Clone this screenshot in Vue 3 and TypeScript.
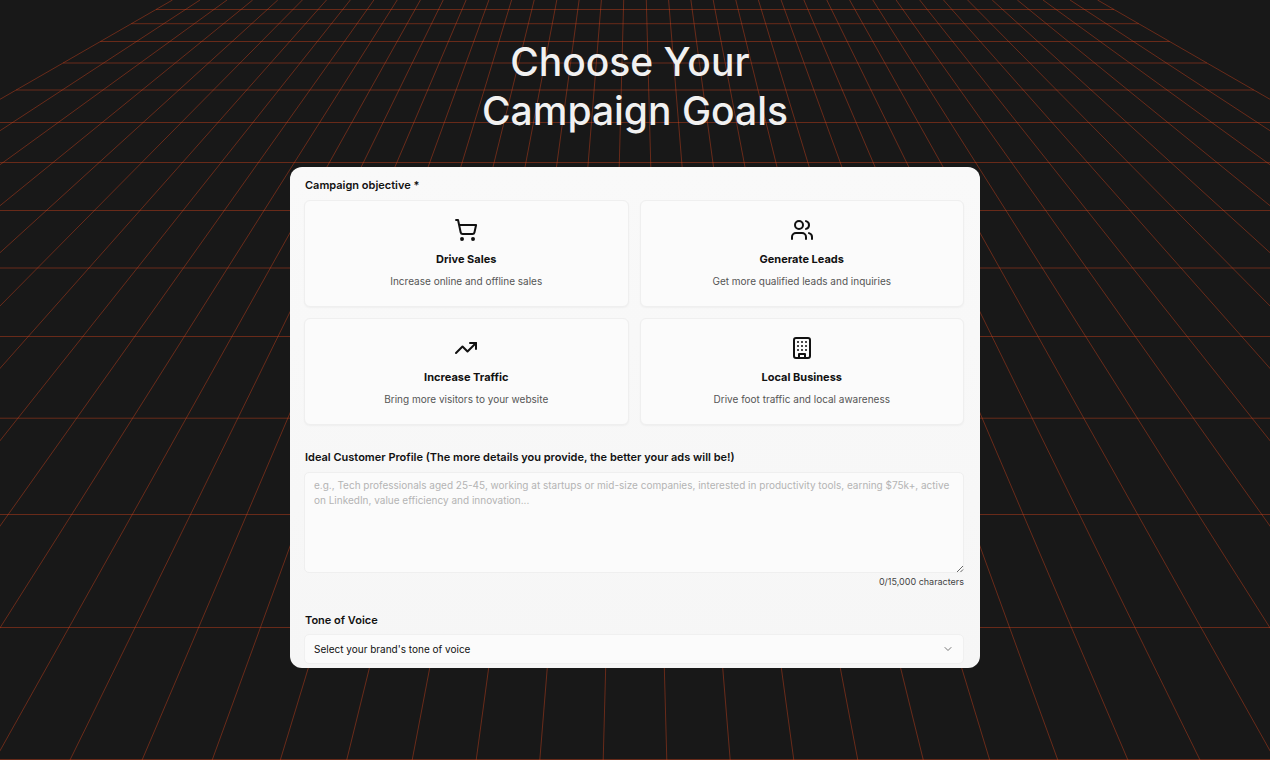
<script setup lang="ts">
import { ref } from 'vue'

interface Goal {
  id: string
  title: string
  text: string
  shapes: string[]
}

const goals: Goal[] = [
  {
    id: 'sales',
    title: 'Drive Sales',
    text: 'Increase online and offline sales',
    shapes: [
      'M7 21a1 1 0 1 0 2 0a1 1 0 1 0-2 0',
      'M18 21a1 1 0 1 0 2 0a1 1 0 1 0-2 0',
      'M2.05 2.05h2l2.66 12.42a2 2 0 0 0 2 1.58h9.78a2 2 0 0 0 1.95-1.57l1.65-7.43H5.12',
    ],
  },
  {
    id: 'leads',
    title: 'Generate Leads',
    text: 'Get more qualified leads and inquiries',
    shapes: [
      'M16 21v-2a4 4 0 0 0-4-4H6a4 4 0 0 0-4 4v2',
      'M5 7a4 4 0 1 0 8 0a4 4 0 1 0-8 0',
      'M22 21v-2a4 4 0 0 0-3-3.87',
      'M16 3.13a4 4 0 0 1 0 7.75',
    ],
  },
  {
    id: 'traffic',
    title: 'Increase Traffic',
    text: 'Bring more visitors to your website',
    shapes: ['M22 7l-8.5 8.5l-5-5L2 17', 'M16 7h6v6'],
  },
  {
    id: 'local',
    title: 'Local Business',
    text: 'Drive foot traffic and local awareness',
    shapes: [
      'M6 2h12a2 2 0 0 1 2 2v16a2 2 0 0 1-2 2H6a2 2 0 0 1-2-2V4a2 2 0 0 1 2-2z',
      'M9 22v-4h6v4',
      'M8 6h.01M16 6h.01M12 6h.01M12 10h.01M12 14h.01M16 10h.01M16 14h.01M8 10h.01M8 14h.01',
    ],
  },
]

const selected = ref<string | null>(null)
const profile = ref('')
const tone = ref('')

// Floor grid: every ray is given by its distance from the centre at the top and bottom edge.
const centre = 635
const floor = 760
const rays: [number, number][] = [
  [11.3, 31.8], [33.6, 95.2], [55.9, 158.8], [78.2, 222.8], [100.8, 288.3],
  [123.4, 354.7], [146.1, 422.8], [168.9, 492.9], [191.8, 565], [214.6, 640.2],
  [237.8, 718.6], [261.1, 801.3], [284.7, 888.8], [308.5, 982.1], [332.6, 1083.8],
  [357.2, 1192.7], [382.3, 1316], [408, 1455.5], [435, 1598], [462.5, 1782.7],
]
const rows = [9.5, 23.7, 41.5, 63, 90, 122.5, 162.5, 210.5, 268, 336.5, 418.2, 514.5, 627.5, 759.5]

const rayPath = rays
  .map(([t, b]) => `M${centre - t} 0L${centre - b} ${floor}M${centre + t} 0L${centre + b} ${floor}`)
  .join('')
const [edgeTop, edgeBottom] = rays[rays.length - 1]
const rowPath = rows
  .map((y) => {
    const half = edgeTop + ((edgeBottom - edgeTop) * y) / floor
    return `M${centre - half} ${y}H${centre + half}`
  })
  .join('')
</script>

<template>
  <main class="page">
    <svg class="grid" viewBox="0 0 1270 760" preserveAspectRatio="xMidYMin slice" aria-hidden="true">
      <path :d="rayPath" />
      <path :d="rowPath" />
    </svg>

    <h1 class="heading">Choose Your&nbsp;<br />Campaign Goals</h1>

    <form class="panel" @submit.prevent>
      <fieldset class="objective">
        <legend class="label">Campaign objective *</legend>
        <div class="goals">
          <button
            v-for="goal in goals"
            :key="goal.id"
            type="button"
            class="goal"
            :aria-pressed="selected === goal.id"
            @click="selected = goal.id"
          >
            <svg class="icon" viewBox="0 0 24 24" aria-hidden="true">
              <path v-for="d in goal.shapes" :key="d" :d="d" />
            </svg>
            <span class="title">{{ goal.title }}</span>
            <span class="text">{{ goal.text }}</span>
          </button>
        </div>
      </fieldset>

      <div class="field profile">
        <label class="label" for="profile">Ideal Customer Profile (The more details you provide, the better your ads will be!)</label>
        <div class="area">
          <textarea
            id="profile"
            v-model="profile"
            maxlength="15000"
            placeholder="e.g., Tech professionals aged 25-45, working at startups or mid-size companies, interested in productivity tools, earning $75k+, active on LinkedIn, value efficiency and innovation..."
          ></textarea>
          <svg class="grip" viewBox="0 0 8 8" aria-hidden="true"><path d="M1 7L7 1M4.500 7L7 4.500" /></svg>
        </div>
        <p class="count">{{ profile.length }}/15,000 characters</p>
      </div>

      <div class="field">
        <label class="label" for="tone">Tone of Voice</label>
        <div class="select">
          <select id="tone" v-model="tone">
            <option value="">Select your brand's tone of voice</option>
            <option value="friendly">Friendly</option>
            <option value="professional">Professional</option>
          </select>
          <svg class="chevron" viewBox="0 0 12 12" aria-hidden="true"><path d="M3 4.500L6 7.500L9 4.500" /></svg>
        </div>
      </div>
    </form>
  </main>
</template>

<style>
body {
  margin: 0;
  background: #181818;
}
</style>

<style scoped>
.page {
  position: relative;
  box-sizing: border-box;
  min-height: 100vh;
  padding: 37px 24px 92px;
  overflow: hidden;
  background: #181818;
  font-family: Inter, "Liberation Sans", sans-serif;
  color: #111;
}
.grid {
  position: absolute;
  inset: 0;
  width: 100%;
  height: 100%;
  fill: none;
  stroke: #d8441c;
  stroke-opacity: 0.42;
  stroke-width: 1;
}
.heading {
  position: relative;
  margin: 0 0 32px;
  font-size: 39px;
  line-height: 49px;
  font-weight: 500;
  text-align: center;
  color: #f1f1f1;
}
.panel {
  position: relative;
  box-sizing: border-box;
  max-width: 690px;
  margin: 0 auto;
  padding: 10px 16px 4px 14px;
  border-radius: 12px;
  background: linear-gradient(180deg, #f9f9f9, #f6f6f6);
}
.objective {
  min-width: 0;
  margin: 0;
  padding: 0;
  border: 0;
}
.label {
  display: block;
  padding: 0 0 0 1px;
  font-size: 11px;
  line-height: 16px;
  font-weight: 600;
}
.goals {
  display: grid;
  grid-template-columns: 1fr 1fr;
  gap: 11px;
  padding-top: 7px;
}
.goal {
  display: flex;
  flex-direction: column;
  align-items: center;
  box-sizing: border-box;
  padding: 17px 12px;
  border: 1px solid #efefef;
  border-radius: 6px;
  background: #fbfbfb;
  box-shadow: 0 1px 2px rgba(0, 0, 0, 0.04);
  font: inherit;
  color: inherit;
}
.icon {
  width: 24px;
  height: 24px;
  margin-bottom: 9px;
  fill: none;
  stroke: #111;
  stroke-width: 2;
  stroke-linecap: round;
  stroke-linejoin: round;
}
.title {
  margin-bottom: 6px;
  font-size: 11px;
  line-height: 16px;
  font-weight: 700;
}
.text {
  font-size: 10px;
  line-height: 16px;
  color: #555;
}
.profile {
  margin: 24px 0 23px;
}
.area {
  position: relative;
  margin-top: 7px;
}
textarea {
  display: block;
  box-sizing: border-box;
  width: 100%;
  height: 101px;
  padding: 5px 9px;
  border: 1px solid #efefef;
  border-radius: 5px;
  background: #fbfbfb;
  font: 400 10px/15px Inter, "Liberation Sans", sans-serif;
  color: #111;
  resize: none;
}
textarea::placeholder {
  color: #b4b4b4;
  opacity: 1;
}
.grip {
  position: absolute;
  right: 0;
  bottom: 0;
  width: 8px;
  height: 8px;
  fill: none;
  stroke: #666;
}
.count {
  margin: 2px 0 0;
  font-size: 9px;
  line-height: 14px;
  text-align: right;
  color: #444;
}
.select {
  position: relative;
  margin-top: 6px;
}
select {
  appearance: none;
  display: block;
  box-sizing: border-box;
  width: 100%;
  height: 30px;
  padding: 0 28px 0 9px;
  border: 1px solid #f0f0f0;
  border-radius: 5px;
  background: #fbfbfb;
  font: 400 10px/16px Inter, "Liberation Sans", sans-serif;
  color: #111;
}
.chevron {
  position: absolute;
  top: 9px;
  right: 10px;
  width: 12px;
  height: 12px;
  fill: none;
  stroke: #777;
  stroke-linecap: round;
  stroke-linejoin: round;
  pointer-events: none;
}
</style>
